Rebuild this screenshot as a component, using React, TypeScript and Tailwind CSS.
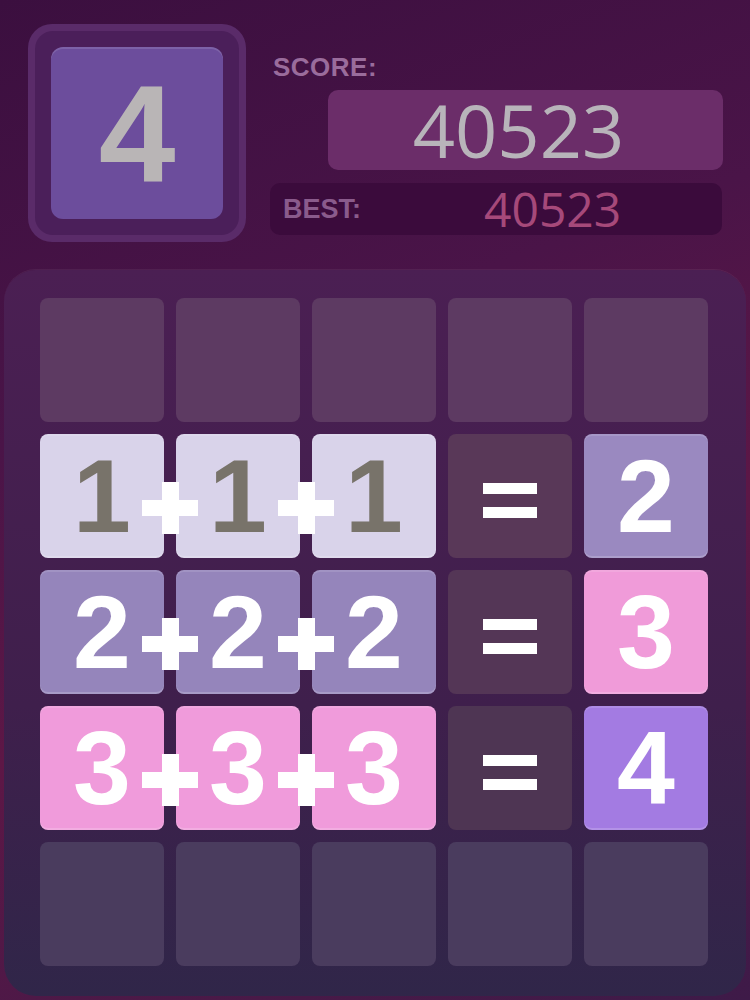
type Cell = { kind: "empty" | "eq" | "tile"; value?: string; bg?: string; fg?: string };

const E: Cell = { kind: "empty" };

const rows: Array<{ cells: Cell[]; plus: boolean; emptyBg: string }> = [
  { cells: [E, E, E, E, E], plus: false, emptyBg: "bg-[#5d3a62]" },
  {
    cells: [
      { kind: "tile", value: "1", bg: "bg-[#d9d3ea]", fg: "text-[#78736a]" },
      { kind: "tile", value: "1", bg: "bg-[#d9d3ea]", fg: "text-[#78736a]" },
      { kind: "tile", value: "1", bg: "bg-[#d9d3ea]", fg: "text-[#78736a]" },
      { kind: "eq" },
      { kind: "tile", value: "2", bg: "bg-[#9a89c0]", fg: "text-white" },
    ],
    plus: true,
    emptyBg: "bg-[#593858]",
  },
  {
    cells: [
      { kind: "tile", value: "2", bg: "bg-[#9585bb]", fg: "text-white" },
      { kind: "tile", value: "2", bg: "bg-[#9585bb]", fg: "text-white" },
      { kind: "tile", value: "2", bg: "bg-[#9585bb]", fg: "text-white" },
      { kind: "eq" },
      { kind: "tile", value: "3", bg: "bg-[#f09bd9]", fg: "text-white" },
    ],
    plus: true,
    emptyBg: "bg-[#543656]",
  },
  {
    cells: [
      { kind: "tile", value: "3", bg: "bg-[#f09bdb]", fg: "text-white" },
      { kind: "tile", value: "3", bg: "bg-[#f09bdb]", fg: "text-white" },
      { kind: "tile", value: "3", bg: "bg-[#f09bdb]", fg: "text-white" },
      { kind: "eq" },
      { kind: "tile", value: "4", bg: "bg-[#a37be2]", fg: "text-white" },
    ],
    plus: true,
    emptyBg: "bg-[#4e3553]",
  },
  { cells: [E, E, E, E, E], plus: false, emptyBg: "bg-[#4a3c5e]" },
];

const digitFont = "font-['Liberation_Sans',Arial,sans-serif]";

function EqualSign() {
  return (
    <div className="mt-[8px] flex flex-col gap-[13px]">
      <div className="h-[11px] w-[54px] bg-white" />
      <div className="h-[11px] w-[54px] bg-white" />
    </div>
  );
}

// the "+" drawn between two tiles, centred on the gap
function Plus({ left }: { left: number }) {
  return (
    <div
      className="absolute top-[48px] flex h-[52px] w-[56px] -translate-x-1/2 items-center justify-center"
      style={{ left }}
    >
      <div className="absolute h-[16px] w-[56px] bg-white" />
      <div className="absolute h-[52px] w-[17px] bg-white" />
    </div>
  );
}

export default function App() {
  return (
    <div className="relative h-[1000px] w-[750px] overflow-hidden bg-[linear-gradient(160deg,#3b0f3f_0%,#4a1448_35%,#5d1746_60%,#3e1a48_100%)]">
      {/* header */}
      <header className="flex h-[270px] pl-[28px] pt-[24px]">
        <div className="h-[218px] w-[218px] rounded-[24px] bg-[#5a2b69] p-[7px]">
          <div className="flex h-full w-full items-center justify-center rounded-[18px] bg-[#4b1f5a]">
            <div className="flex h-[172px] w-[172px] items-center justify-center rounded-[12px] bg-[#6c4d9c] shadow-[inset_0_2px_0_rgba(255,255,255,0.12)]">
              <span className={`${digitFont} text-[138px] font-bold leading-none text-[#b9b5b6]`}>4</span>
            </div>
          </div>
        </div>

        <div className="ml-[24px] flex w-[452px] flex-col">
          <div className={`${digitFont} mt-[30px] pl-[3px] text-[26px] font-bold leading-none tracking-[0.5px] text-[#9a6c9c]`}>SCORE:</div>
          <div className="ml-[58px] mt-[10px] flex h-[80px] w-[395px] items-center justify-center rounded-[10px] bg-[#6b2d69] pr-[14px]">
            <span className="font-['Open_Sans',sans-serif] text-[74px] leading-none text-[#b8b4ba]">40523</span>
          </div>
          <div className="mt-[13px] flex h-[52px] w-[452px] items-center rounded-[10px] bg-[#3b0b3c]">
            <span className={`${digitFont} pl-[13px] text-[27px] font-bold leading-none text-[#8a5b8c]`}>BEST:</span>
            <span className="ml-[123px] font-['Open_Sans',sans-serif] text-[48px] leading-none text-[#a6497a]">40523</span>
          </div>
        </div>
      </header>

      {/* board */}
      <main className="mx-[4px] flex h-[726px] flex-col gap-[12px] rounded-[32px] bg-[linear-gradient(180deg,#4b1f53_0%,#3f1f4c_60%,#302649_100%)] pl-[36px] pt-[28px] shadow-[0_-1px_0_rgba(255,255,255,0.06)]">
        {rows.map((row, ri) => (
          <div key={ri} className="relative grid w-[668px] grid-cols-5 gap-[12px]">
            {row.cells.map((c, ci) => {
              if (c.kind === "tile") {
                return (
                  <div
                    key={ci}
                    className={`flex h-[124px] w-[124px] items-center justify-center rounded-[8px] ${c.bg} shadow-[inset_0_-2px_0_rgba(255,255,255,0.18),inset_0_2px_0_rgba(255,255,255,0.12)]`}
                  >
                    <span className={`${digitFont} text-[104px] font-bold leading-none ${c.fg}`}>{c.value}</span>
                  </div>
                );
              }
              return (
                <div
                  key={ci}
                  className={`flex h-[124px] w-[124px] items-center justify-center rounded-[8px] ${row.emptyBg}`}
                >
                  {c.kind === "eq" && <EqualSign />}
                </div>
              );
            })}
            {row.plus && (
              <>
                <Plus left={130} />
                <Plus left={266} />
              </>
            )}
          </div>
        ))}
      </main>
    </div>
  );
}
